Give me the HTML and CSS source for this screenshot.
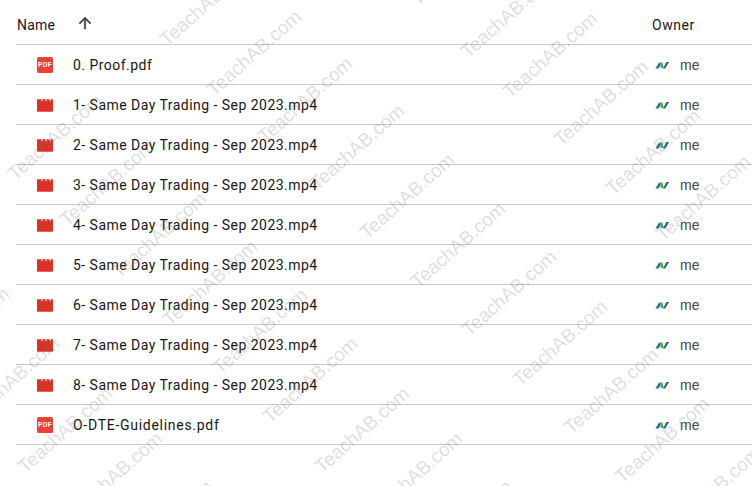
FILE: index.html
```html
<!DOCTYPE html>
<html lang="en">
<head>
<meta charset="utf-8">
<title>Files</title>
<link rel="stylesheet" href="styles.css">
</head>
<body>
<svg class="defs" width="0" height="0" aria-hidden="true">
  <symbol id="pdf" viewBox="0 0 16 16"><rect width="16" height="16" rx="1.5" fill="#ea4335"/><text x="8" y="10.4" text-anchor="middle" class="pdf-label">PDF</text></symbol>
  <symbol id="video" viewBox="0 0 16 16"><path d="M0 2.3H4l.9 2h1l-.9-2h3.1l.9 2h1l-.9-2h3.1l.9 2h1l-.9-2H16v11.4a1 1 0 0 1-1 1H1a1 1 0 0 1-1-1z" fill="#dc3226"/></symbol>
  <symbol id="logo" viewBox="0 0 20 20"><circle cx="10" cy="10" r="9.6" fill="#fff" stroke="#f4f4f4" stroke-width=".6"/><path d="M3.4 13.6 7 7.8h3l-3.4 5.8z" fill="#1f6fb2"/><path d="M7.4 7.6h2.9l1.6 5.5H9z" fill="#5ca53a"/><path d="M11 13.4l3.4-6.3h2.7l-4 6.3z" fill="#1b5f9e"/></symbol>
</svg>
<main class="list">
  <div class="row head">
    <div class="name-cell"><span class="head-name">Name</span>
      <svg class="sort" viewBox="0 0 24 24"><path d="M4 12l1.41 1.41L11 7.83V20h2V7.83l5.58 5.59L20 12l-8-8z"/></svg>
    </div>
    <div class="owner-cell head-owner">Owner</div>
  </div>
  <div class="row"><div class="name-cell"><svg class="ficon"><use href="#pdf"/></svg><span class="fname">0. Proof.pdf</span></div><div class="owner-cell"><svg class="avatar"><use href="#logo"/></svg><span class="me">me</span></div></div>
  <div class="row"><div class="name-cell"><svg class="ficon"><use href="#video"/></svg><span class="fname">1- Same Day Trading - Sep 2023.mp4</span></div><div class="owner-cell"><svg class="avatar"><use href="#logo"/></svg><span class="me">me</span></div></div>
  <div class="row"><div class="name-cell"><svg class="ficon"><use href="#video"/></svg><span class="fname">2- Same Day Trading - Sep 2023.mp4</span></div><div class="owner-cell"><svg class="avatar"><use href="#logo"/></svg><span class="me">me</span></div></div>
  <div class="row"><div class="name-cell"><svg class="ficon"><use href="#video"/></svg><span class="fname">3- Same Day Trading - Sep 2023.mp4</span></div><div class="owner-cell"><svg class="avatar"><use href="#logo"/></svg><span class="me">me</span></div></div>
  <div class="row"><div class="name-cell"><svg class="ficon"><use href="#video"/></svg><span class="fname">4- Same Day Trading - Sep 2023.mp4</span></div><div class="owner-cell"><svg class="avatar"><use href="#logo"/></svg><span class="me">me</span></div></div>
  <div class="row"><div class="name-cell"><svg class="ficon"><use href="#video"/></svg><span class="fname">5- Same Day Trading - Sep 2023.mp4</span></div><div class="owner-cell"><svg class="avatar"><use href="#logo"/></svg><span class="me">me</span></div></div>
  <div class="row"><div class="name-cell"><svg class="ficon"><use href="#video"/></svg><span class="fname">6- Same Day Trading - Sep 2023.mp4</span></div><div class="owner-cell"><svg class="avatar"><use href="#logo"/></svg><span class="me">me</span></div></div>
  <div class="row"><div class="name-cell"><svg class="ficon"><use href="#video"/></svg><span class="fname">7- Same Day Trading - Sep 2023.mp4</span></div><div class="owner-cell"><svg class="avatar"><use href="#logo"/></svg><span class="me">me</span></div></div>
  <div class="row"><div class="name-cell"><svg class="ficon"><use href="#video"/></svg><span class="fname">8- Same Day Trading - Sep 2023.mp4</span></div><div class="owner-cell"><svg class="avatar"><use href="#logo"/></svg><span class="me">me</span></div></div>
  <div class="row"><div class="name-cell"><svg class="ficon"><use href="#pdf"/></svg><span class="fname fname-caps">O-DTE-Guidelines.pdf</span></div><div class="owner-cell"><svg class="avatar"><use href="#logo"/></svg><span class="me">me</span></div></div>
</main>
<div class="watermarks" aria-hidden="true">
  <span class="wm" style="left:160px;top:43px">TeachAB.com</span>
  <span class="wm" style="left:207px;top:93px">TeachAB.com</span>
  <span class="wm" style="left:258px;top:140px">TeachAB.com</span>
  <span class="wm" style="left:310px;top:187px">TeachAB.com</span>
  <span class="wm" style="left:360px;top:236px">TeachAB.com</span>
  <span class="wm" style="left:411px;top:285px">TeachAB.com</span>
  <span class="wm" style="left:462px;top:333px">TeachAB.com</span>
  <span class="wm" style="left:513px;top:383px">TeachAB.com</span>
  <span class="wm" style="left:564px;top:431px">TeachAB.com</span>
  <span class="wm" style="left:615px;top:480px">TeachAB.com</span>
  <span class="wm" style="left:666px;top:530px">TeachAB.com</span>
  <span class="wm" style="left:411px;top:3px">TeachAB.com</span>
  <span class="wm" style="left:461px;top:55px">TeachAB.com</span>
  <span class="wm" style="left:503px;top:95px">TeachAB.com</span>
  <span class="wm" style="left:554px;top:143px">TeachAB.com</span>
  <span class="wm" style="left:606px;top:192px">TeachAB.com</span>
  <span class="wm" style="left:656px;top:238px">TeachAB.com</span>
  <span class="wm" style="left:8px;top:177px">TeachAB.com</span>
  <span class="wm" style="left:60px;top:223px">TeachAB.com</span>
  <span class="wm" style="left:112px;top:275px">TeachAB.com</span>
  <span class="wm" style="left:163px;top:323px">TeachAB.com</span>
  <span class="wm" style="left:213px;top:371px">TeachAB.com</span>
  <span class="wm" style="left:263px;top:420px">TeachAB.com</span>
  <span class="wm" style="left:315px;top:470px">TeachAB.com</span>
  <span class="wm" style="left:368px;top:515px">TeachAB.com</span>
  <span class="wm" style="left:418px;top:563px">TeachAB.com</span>
  <span class="wm" style="left:-85px;top:370px">TeachAB.com</span>
  <span class="wm" style="left:-35px;top:420px">TeachAB.com</span>
  <span class="wm" style="left:18px;top:470px">TeachAB.com</span>
  <span class="wm" style="left:68px;top:515px">TeachAB.com</span>
  <span class="wm" style="left:118px;top:563px">TeachAB.com</span>
</div>
</body>
</html>
```

FILE: styles.css
```css
html, body {
  margin: 0;
  background: #fff;
}
body {
  position: relative;
  width: 752px;
  height: 486px;
  overflow: hidden;
  font-family: Roboto, "Liberation Sans", sans-serif;
  font-size: 14px;
  color: #161616;
}
.defs {
  position: absolute;
}
.list {
  margin-left: 16px;
}
.row {
  display: flex;
  align-items: center;
  height: 39px;
  border-bottom: 1px solid #c7c7c7;
}
.head {
  box-sizing: border-box;
  height: 45px;
  padding-top: 6px;
}
.name-cell {
  display: flex;
  align-items: center;
  width: 636px;
  flex: none;
}
.owner-cell {
  display: flex;
  align-items: center;
}
.head-name {
  margin-left: 1px;
  width: 59px;
  letter-spacing: .2px;
}
.sort {
  width: 18px;
  height: 18px;
  fill: #444746;
  stroke: #444746;
  stroke-width: .7;
  margin-top: -4px;
}
.head-owner {
  letter-spacing: .55px;
}
.ficon {
  width: 16px;
  height: 16px;
  margin-left: 21px;
  flex: none;
}
.pdf-label {
  font-family: "Liberation Sans", sans-serif;
  font-size: 6.4px;
  font-weight: 700;
  letter-spacing: .35px;
  fill: #fff;
}
.fname {
  margin-left: 20px;
  letter-spacing: .47px;
}
.fname-caps {
  letter-spacing: .72px;
}
.avatar {
  width: 20px;
  height: 20px;
  flex: none;
}
.me {
  margin-left: 8px;
  color: #444746;
  font-family: "Liberation Sans", sans-serif;
}
.watermarks {
  position: absolute;
  inset: 0;
  overflow: hidden;
  pointer-events: none;
}
.wm {
  position: absolute;
  font-family: "Liberation Sans", sans-serif;
  font-size: 19.2px;
  line-height: 20px;
  white-space: nowrap;
  color: rgba(110, 110, 110, .24);
  transform-origin: 0 16px;
  transform: translate(7px, -12px) rotate(-41.5deg);
}
```
